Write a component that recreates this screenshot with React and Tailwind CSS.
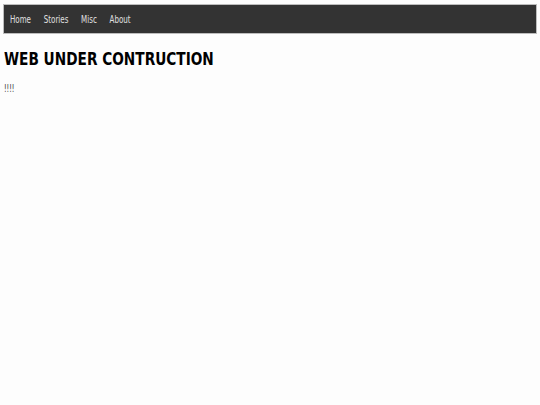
const links = ['Home', 'Stories', 'Misc', 'About'];

export default function App() {
  return (
    <div className="min-h-screen bg-[#fdfdfd] px-[3px] pt-[4px] font-['DejaVu_Sans',sans-serif]">
      <nav className="flex h-[30px] items-center border border-[#bdbdbd] bg-[#333333] pt-[2px] pl-[6px]">
        <div className="flex origin-left scale-x-[0.71] gap-[18px]">
          {links.map((l) => (
            <a key={l} href="#" className="text-[10px] leading-[14px] text-[#e0e0e0]">
              {l}
            </a>
          ))}
        </div>
      </nav>
      <h1 className="mt-[13px] ml-[1px] origin-left scale-x-[0.76] text-[18px] font-bold leading-[24px] text-black">
        WEB UNDER CONTRUCTION
      </h1>
      <p className="mt-[11px] ml-[1px] origin-left scale-x-[0.65] text-[10px] leading-[14px] text-[#333]">!!!!</p>
    </div>
  );
}
